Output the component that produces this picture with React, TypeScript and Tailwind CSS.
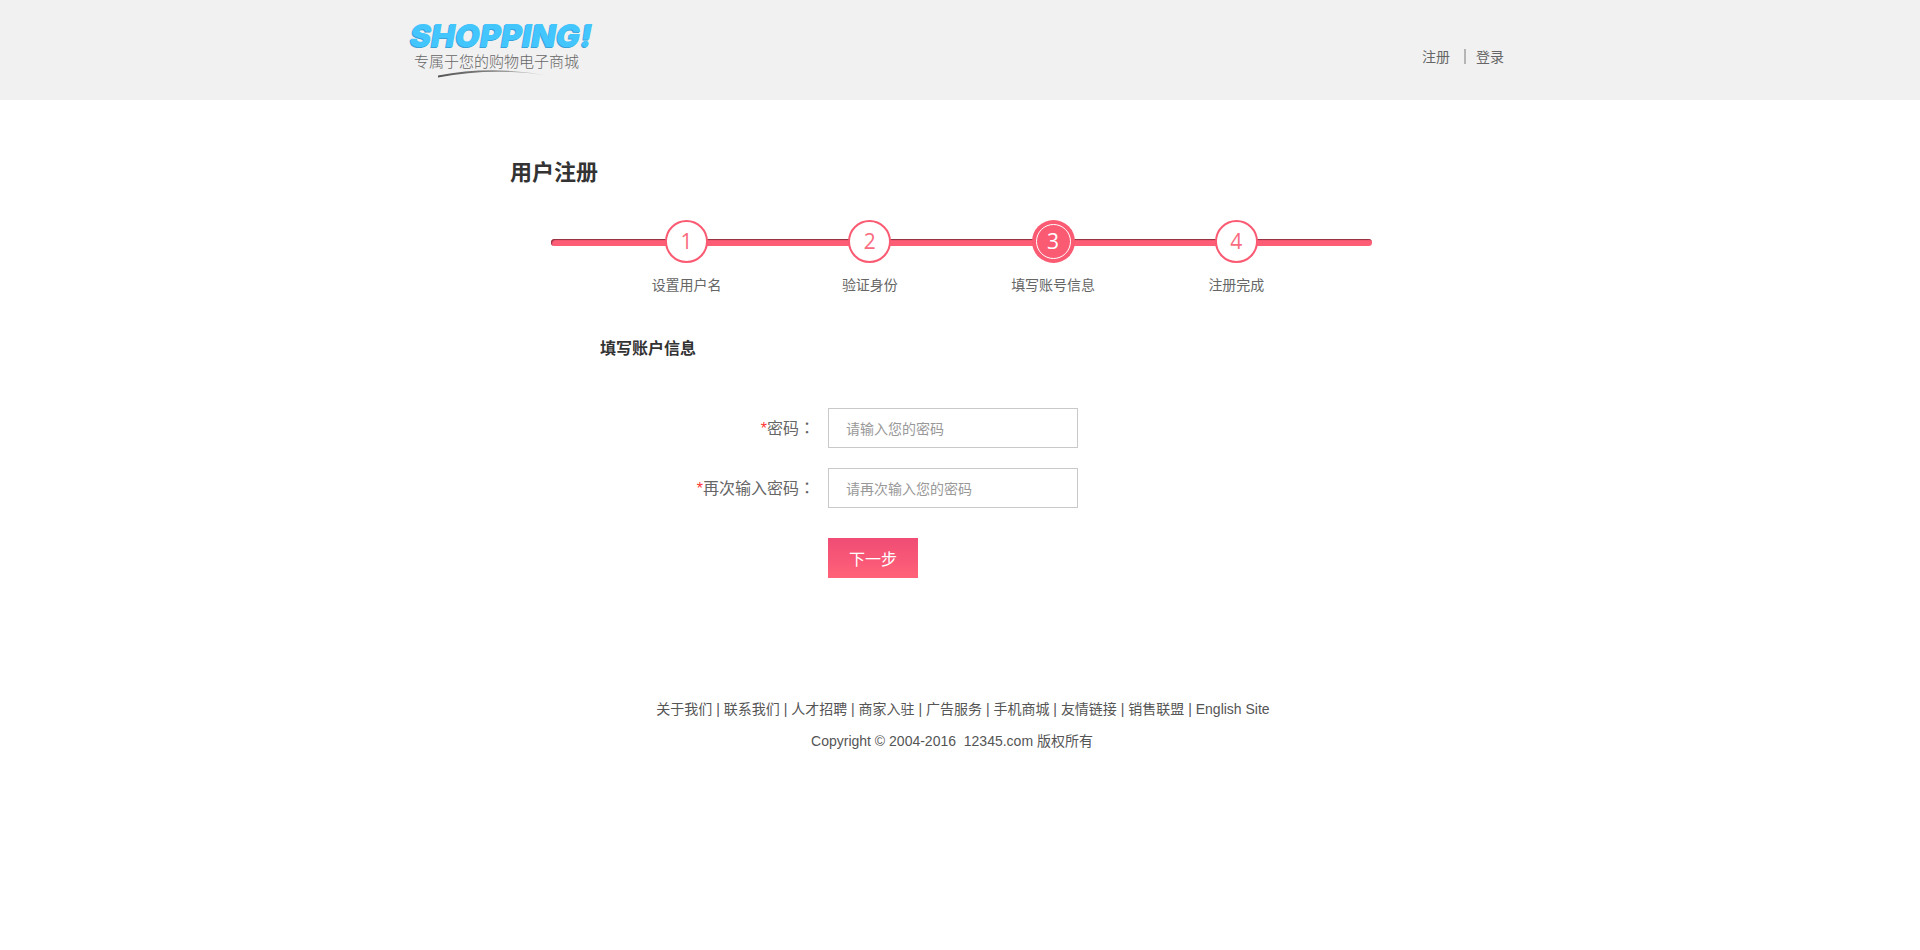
import React from 'react';

const steps = ['设置用户名', '验证身份', '填写账号信息', '注册完成'];
const activeStep = 3;

const footerLinks = [
  '关于我们',
  '联系我们',
  '人才招聘',
  '商家入驻',
  '广告服务',
  '手机商城',
  '友情链接',
  '销售联盟',
  'English Site',
];

function Logo() {
  return (
    <a href="#" className="flex flex-col">
      <span className="font-['Inter','Open_Sans',sans-serif] text-[32px] leading-8 font-black text-[#43c5fe] italic [text-shadow:-1px_1px_0_#38a3d8]">
        SHOPPING!
      </span>
      <span className="pl-1 text-[15px] leading-[18px] font-light text-[#666]">专属于您的购物电子商城</span>
      <svg className="ml-7 h-2 w-28" viewBox="0 0 112 8" aria-hidden="true">
        <defs>
          <linearGradient id="swoosh" x1="0" x2="1" y1="0" y2="0">
            <stop offset="0" stopColor="#555" />
            <stop offset="0.55" stopColor="#888" />
            <stop offset="1" stopColor="#ddd" />
          </linearGradient>
        </defs>
        <path d="M0 5.5 Q54 -5 110 5.5 Q54 -3 0 7.5 Z" fill="url(#swoosh)" />
      </svg>
    </a>
  );
}

function Header() {
  return (
    <header className="h-[100px] bg-[#f1f1f1]">
      <div className="mx-auto flex max-w-[1100px] items-start justify-between pt-5">
        <Logo />
        <nav className="mt-[26px] flex items-center pr-[6px] text-[14px] leading-5 text-[#666]">
          <a href="#">注册</a>
          <span className="mr-[10px] ml-[14px] h-[15px] w-[2px] bg-[#b5b5b5]" />
          <a href="#">登录</a>
        </nav>
      </div>
    </header>
  );
}

function Steps() {
  return (
    <div className="relative mt-[34px] mr-[38px] ml-[41px]">
      <div className="absolute inset-x-0 top-[19px] h-[7px] rounded-full bg-[#fd5d75] shadow-[inset_1px_1px_1px_#8f2f3e]" />
      <ol className="relative grid grid-cols-4 px-11">
        {steps.map((label, i) => {
          const active = i + 1 === activeStep;
          return (
            <li key={label} className="flex flex-col items-center">
              <span
                className={
                  active
                    ? 'flex size-[43px] rounded-full bg-[#fa5b73] p-1'
                    : 'flex size-[43px] rounded-full border-2 border-[#fa5b73] bg-white p-0.5'
                }
              >
                <span
                  className={
                    active
                      ? "flex flex-1 items-center justify-center rounded-full border border-white font-['Open_Sans',sans-serif] text-[21px] text-white"
                      : "flex flex-1 items-center justify-center rounded-full font-['Open_Sans',sans-serif] text-[21px] text-[#fa6b80]"
                  }
                >
                  {i + 1}
                </span>
              </span>
              <span className="mt-[11px] text-[14px] leading-5 text-[#666]">{label}</span>
            </li>
          );
        })}
      </ol>
    </div>
  );
}

function Field({ id, label, placeholder }: { id: string; label: string; placeholder: string }) {
  return (
    <>
      <label htmlFor={id} className="text-right text-[16px] leading-6 text-[#666]">
        <span className="font-['Liberation_Sans',sans-serif] text-[#f33]">*</span>
        {label}
        <span className="font-['Noto_Sans_CJK_TC',sans-serif]">：</span>
      </label>
      <input
        id={id}
        type="password"
        placeholder={placeholder}
        className="h-10 w-[250px] border border-[#c9c9c9] bg-white px-[17px] text-[14px] text-[#555] outline-none placeholder:text-[#999]"
      />
    </>
  );
}

export default function App() {
  return (
    <div className="min-h-screen bg-white font-['Noto_Sans_CJK_SC',sans-serif]">
      <Header />
      <main className="mx-auto max-w-[900px] pt-[54px]">
        <h1 className="text-[22px] leading-8 font-bold text-[#333]">用户注册</h1>
        <Steps />
        <h2 className="mt-[41px] ml-[90px] text-[16px] leading-6 font-bold text-[#333]">填写账户信息</h2>
        <form className="mt-[49px]" onSubmit={(e) => e.preventDefault()}>
          <div className="grid grid-cols-[305px_1fr] items-center gap-x-[13px] gap-y-5">
            <Field id="password" label="密码" placeholder="请输入您的密码" />
            <Field id="confirm" label="再次输入密码" placeholder="请再次输入您的密码" />
          </div>
          <button
            type="submit"
            className="mt-[30px] ml-[318px] block h-10 w-[90px] bg-linear-to-b from-[#f04c75] to-[#ff6278] text-[16px] text-white"
          >
            下一步
          </button>
        </form>
      </main>
      <footer className="mt-[121px] text-center font-['Liberation_Sans','Noto_Sans_CJK_SC',sans-serif] text-[14px] leading-5 text-[#555]">
        <p className="pl-[6px]">
          {footerLinks.map((link, i) => (
            <React.Fragment key={link}>
              {i > 0 && ' | '}
              <a href="#">{link}</a>
            </React.Fragment>
          ))}
        </p>
        <p className="mt-3 pr-4">Copyright © 2004-2016&nbsp; 12345.com 版权所有</p>
      </footer>
    </div>
  );
}
